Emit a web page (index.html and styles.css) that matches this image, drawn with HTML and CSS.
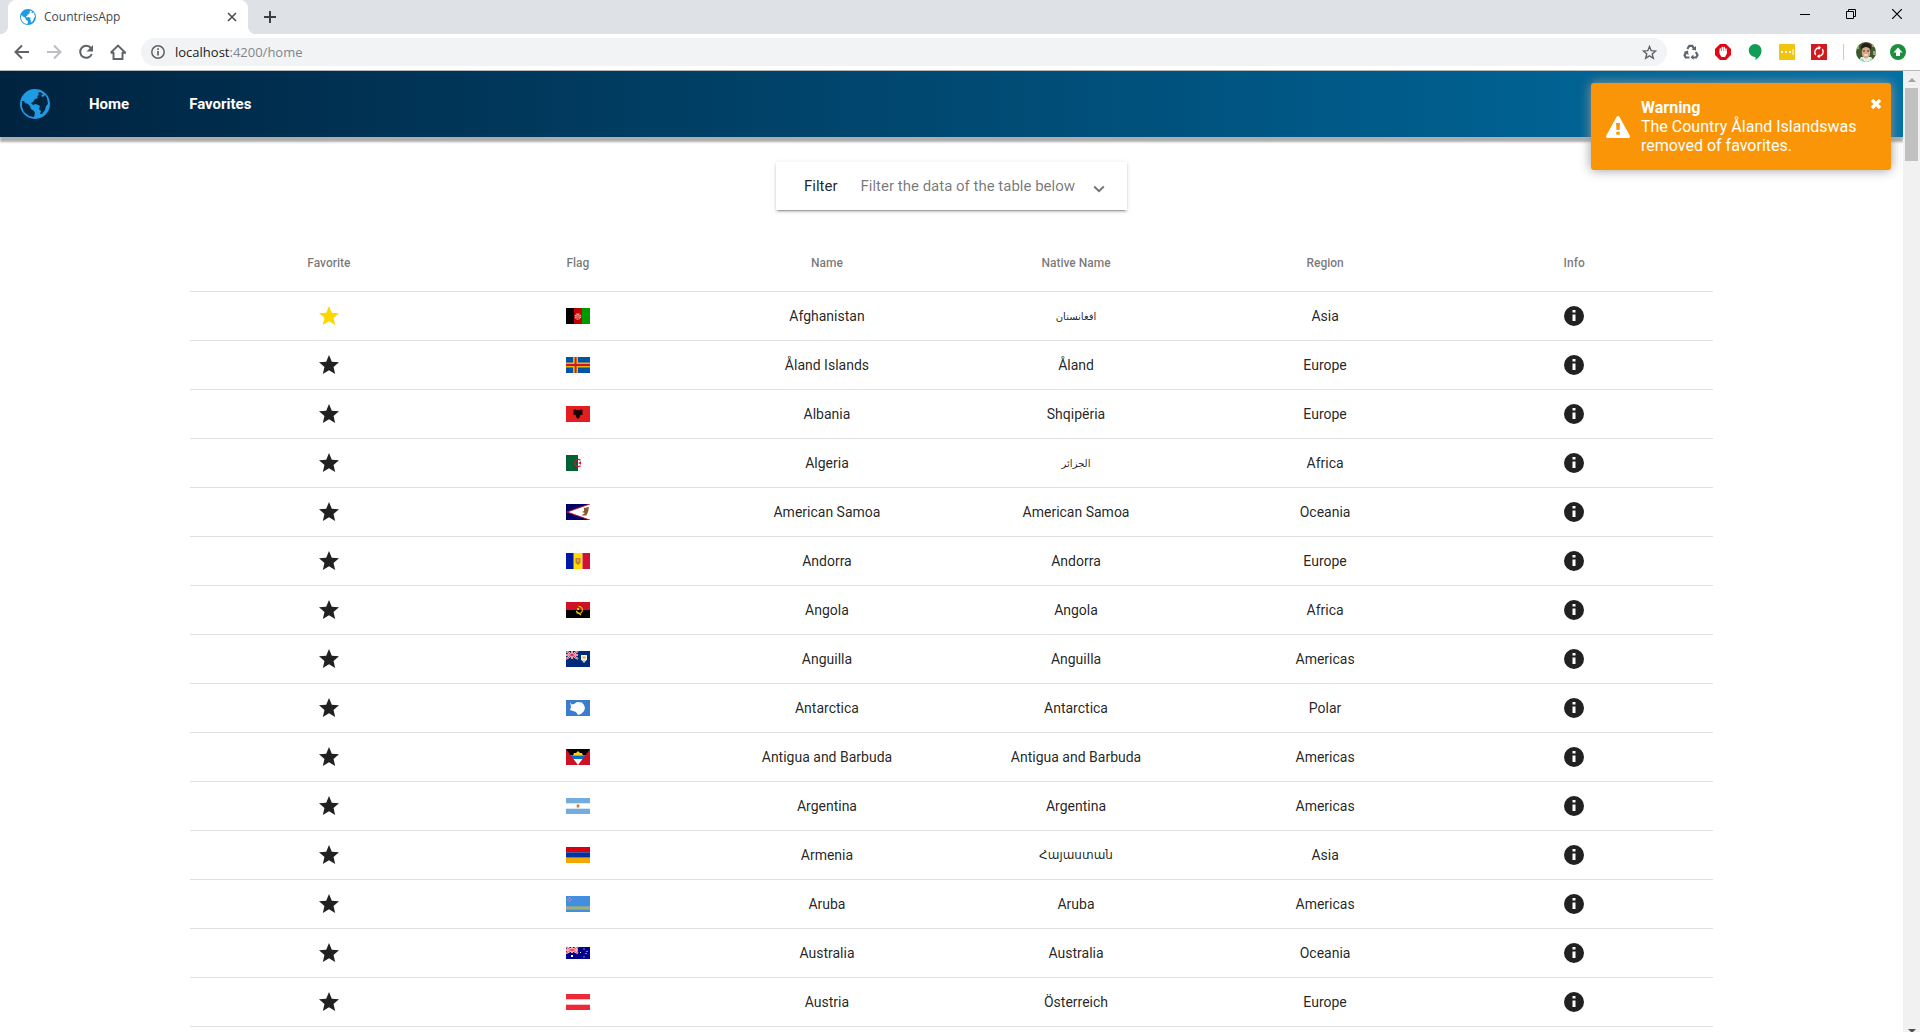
FILE: index.html
```html
<!DOCTYPE html>
<html lang="en">
<head>
<meta charset="utf-8">
<title>CountriesApp</title>
<link rel="stylesheet" href="styles.css">
</head>
<body>
<svg class="defs" aria-hidden="true">
  <symbol id="globe" viewBox="0 0 30 30">
    <path fill="currentColor" fill-rule="evenodd" d="M15 0a15 15 0 1 0 0 30 15 15 0 0 0 0-30zM2 12 4 12 5 14 8 15 10 17 11 20 14 22 15 24 14 28 9 27 4 23 2 18zM15 2 20 3 18 4 19 6 17 7 18 9 15 10 13 13 11 14 13 16 16 15 20 17 19 20 21 22 20 25 22 25 25 21 26 17 28 15 27 9 25 6 23 8 21 7 23 5 20 3z"/>
  </symbol>
  <symbol id="star" viewBox="0 0 24 24"><path fill="currentColor" d="M12 17.27 18.18 21l-1.64-7.03L22 9.24l-7.19-.61L12 2 9.19 8.63 2 9.24l5.46 4.73L5.82 21z"/></symbol>
  <symbol id="info" viewBox="0 0 24 24"><path fill="currentColor" d="M12 2a10 10 0 1 0 0 20 10 10 0 0 0 0-20zm1.500 15h-3v-6.500h3zm0-8.500h-3V6h3z"/></symbol>
</svg>

<header class="browser">
  <div class="tabstrip">
    <div class="tab">
      <svg class="tab-icon"><use href="#globe"/></svg>
      <span class="tab-title">CountriesApp</span>
      <button class="icon-btn" aria-label="Close tab"><svg width="10" height="10" viewBox="0 0 10 10"><path d="M1 1l8 8M9 1L1 9" stroke="#4a4d51" stroke-width="1.6"/></svg></button>
    </div>
    <button class="icon-btn new-tab" aria-label="New tab"><svg width="12" height="12" viewBox="0 0 12 12"><path d="M6 0v12M0 6h12" stroke="#3c4043" stroke-width="2"/></svg></button>
    <div class="window-controls">
      <button class="icon-btn" aria-label="Minimize"><svg width="10" height="10"><path d="M0 5.500h10" stroke="#000"/></svg></button>
      <button class="icon-btn" aria-label="Restore"><svg width="10" height="10"><path d="M.5 2.500h7v7h-7zM2.500 2.500v-2h7v7h-2" fill="none" stroke="#000"/></svg></button>
      <button class="icon-btn" aria-label="Close"><svg width="10" height="10"><path d="M0 0l10 10M10 0L0 10" stroke="#000" stroke-width="1.200"/></svg></button>
    </div>
  </div>
  <div class="toolbar">
    <div class="nav-buttons">
      <button class="icon-btn" aria-label="Back"><svg width="16" height="16" viewBox="0 0 16 16"><path d="M15 8H2M8 1.500 1.500 8 8 14.500" fill="none" stroke="#5f6368" stroke-width="2"/></svg></button>
      <button class="icon-btn" aria-label="Forward"><svg width="16" height="16" viewBox="0 0 16 16"><path d="M1 8h13M8 1.500 14.500 8 8 14.500" fill="none" stroke="#bcbec1" stroke-width="2"/></svg></button>
      <button class="icon-btn" aria-label="Reload"><svg width="16" height="16" viewBox="0 0 16 16"><path d="M13 4.200A6 6 0 1 0 13.800 10" fill="none" stroke="#5f6368" stroke-width="2"/><path d="M15 1v6.500H8.500z" fill="#5f6368"/></svg></button>
      <button class="icon-btn" aria-label="Home page"><svg width="16" height="16" viewBox="0 0 16 16"><path d="M3.500 8v7h9V8M.7 8.700 8 1.500l7.300 7.200H12M.7 8.700H4" fill="none" stroke="#5f6368" stroke-width="1.900"/></svg></button>
    </div>
    <div class="omnibox">
      <svg width="14" height="14" viewBox="0 0 14 14"><circle cx="7" cy="7" r="6.200" fill="none" stroke="#5f6368" stroke-width="1.500"/><path d="M7 6v4.500M7 3.300v1.700" stroke="#5f6368" stroke-width="1.700"/></svg>
      <span class="url"><b>localhost</b>:4200/home</span>
      <button class="icon-btn" aria-label="Bookmark"><svg width="15" height="15" viewBox="0 0 15 15"><path d="M7.500 1.500 9.200 5.700 13.700 6 10.200 8.900 11.300 13.300 7.500 10.900 3.700 13.300 4.800 8.900 1.300 6 5.800 5.700z" fill="none" stroke="#5f6368" stroke-width="1.400"/></svg></button>
    </div>
    <div class="extensions">
      <svg viewBox="0 0 16 16"><path d="M4.300 5 6.300 1.800h3L11 4.500M12.800 8l1.700 3-1.300 2.500H10M6.500 13.500H2.700L1.500 11.200 3 8.500" fill="none" stroke="#5b6673" stroke-width="2.200"/><path d="M8.500 5.500 13 6.500 13 2zM10.500 10.500v5.500L7.500 13.300zM.5 8 5 6.500 5.500 11z" fill="#5b6673"/></svg>
      <svg viewBox="0 0 16 16"><path d="M5 0h6l5 5v6l-5 5H5l-5-5V5z" fill="#e30613"/><path d="M5.300 8V5M7.300 8V3.500M9.200 8V3.500M11 9V5" stroke="#fff" stroke-width="1.500" stroke-linecap="round"/><path d="M4.600 7h7.100v3L10 13H6.500L4.600 10z" fill="#fff"/></svg>
      <svg viewBox="0 0 16 16"><path d="M8 0a6.500 6.500 0 0 1 6.500 7c0 4-3 7-6 9v-3A6.500 6.500 0 0 1 8 0z" fill="#0f9d58"/></svg>
      <svg viewBox="0 0 16 16"><rect width="16" height="16" rx="1" fill="#f1c40f"/><path d="M2 7h2v2H2zM6 7h2v2H6zM10 7h2v2h-2zM13.500 5h1v6h-1z" fill="#fff"/></svg>
      <svg viewBox="0 0 16 16"><rect width="16" height="16" fill="#d11a20"/><path d="M4.700 11A4.500 4.500 0 0 1 8 3.800M11.300 5A4.500 4.500 0 0 1 8 12.200" fill="none" stroke="#fff" stroke-width="1.400"/><path d="M7.500 1.500v4.600l2.600-2.300zM8.500 9.900v4.600l-2.600-2.300z" fill="#fff"/></svg>
    </div>
    <div class="profile">
      <svg width="20" height="20" viewBox="0 0 20 20"><clipPath id="face"><circle cx="10" cy="10" r="10"/></clipPath><g clip-path="url(#face)"><path fill="#3d5a2c" d="M0 0h20v20H0z"/><path fill="#92b06a" d="M0 4h3v3H0zM16 2h2v3h-2zM17 9h3v4h-3z"/><path fill="#e8efe8" d="M2 20l3-5h10l4 5z"/><path fill="#7be0c5" d="M3 20l3-4 3 4zM13 20l2-4 2 4z"/><ellipse cx="10" cy="10.500" rx="4.200" ry="6" fill="#d9a78b"/><path fill="#2a1d18" d="M5 8C4 3 7 1 10 1s6 2 5 7l-1-2-4-1-4 1z"/><path d="M7 9h2M11 9h2" stroke="#4a2d20"/><path d="M8 13h4" stroke="#fff"/></g></svg>
      <svg width="16" height="16" viewBox="0 0 16 16"><circle cx="8" cy="8" r="8" fill="#1e8e3e"/><path d="M8 3.500 12.500 8.500H10v3.500H6V8.500H3.500z" fill="#fff"/></svg>
    </div>
  </div>
</header>

<div class="viewport">
  <div class="page">
    <nav class="navbar">
      <a href="#home" aria-label="Countries"><svg class="logo"><use href="#globe"/></svg></a>
      <a href="#home">Home</a>
      <a href="#favorites">Favorites</a>
    </nav>

    <main>
      <button class="filter" aria-expanded="false">
        <span class="filter-title">Filter</span>
        <span class="filter-text">Filter the data of the table below</span>
        <svg width="12" height="8" viewBox="0 0 12 8"><path d="M1.200 1.500 6 6.200l4.800-4.700" fill="none" stroke="#757575" stroke-width="2"/></svg>
      </button>

      <table class="countries">
        <thead><tr><th>Favorite</th><th>Flag</th><th>Name</th><th>Native Name</th><th>Region</th><th>Info</th></tr></thead>
        <tbody>
          <tr>
            <td><button class="icon-btn favorite" aria-label="Favorite"><svg class="icon"><use href="#star"/></svg></button></td>
            <td><svg class="flag" viewBox="0 0 24 16"><path d="M0 0h8v16H0z"/><path fill="#c00000" d="M8 0h8v16H8z"/><path fill="#009a00" d="M16 0h8v16h-8z"/><circle cx="12" cy="8.500" r="2.700" fill="none" stroke="#eaa" stroke-width="1.200" stroke-dasharray="1.500 .6"/><path fill="#f3cccc" d="M11 6h2v1h1v3h-4V7h1z" opacity=".5"/></svg></td>
            <td>Afghanistan</td><td lang="fa" class="arabic">افغانستان</td><td>Asia</td>
            <td><button class="icon-btn" aria-label="Info"><svg class="icon"><use href="#info"/></svg></button></td>
          </tr>
          <tr>
            <td><button class="icon-btn" aria-label="Favorite"><svg class="icon"><use href="#star"/></svg></button></td>
            <td><svg class="flag" viewBox="0 0 24 16"><path fill="#0053a5" d="M0 0h24v16H0z"/><path fill="#e9b500" d="M7 0h5v16H7zM0 5.500h24v5H0z"/><path fill="#d21034" d="M8.700 0h1.800v16H8.700zM0 7h24v2H0z"/></svg></td>
            <td>Åland Islands</td><td>Åland</td><td>Europe</td>
            <td><button class="icon-btn" aria-label="Info"><svg class="icon"><use href="#info"/></svg></button></td>
          </tr>
          <tr>
            <td><button class="icon-btn" aria-label="Favorite"><svg class="icon"><use href="#star"/></svg></button></td>
            <td><svg class="flag" viewBox="0 0 24 16"><path fill="#e41e20" d="M0 0h24v16H0z"/><path fill="#1a0506" d="M8 3.500h2l1 1 1-1 1 1 1-1h2l.5 1-.5 4-2 1v1.500L13 12l-1 1-1-1-1-1V9.500l-2-1-.5-4z"/><path fill="#7a1214" d="M7 4h1v5H7zM16 4h1v5h-1z"/></svg></td>
            <td>Albania</td><td>Shqipëria</td><td>Europe</td>
            <td><button class="icon-btn" aria-label="Info"><svg class="icon"><use href="#info"/></svg></button></td>
          </tr>
          <tr>
            <td><button class="icon-btn" aria-label="Favorite"><svg class="icon"><use href="#star"/></svg></button></td>
            <td><svg class="flag" viewBox="0 0 24 16"><path fill="#fff" d="M0 0h24v16H0z"/><path fill="#006233" d="M0 0h12v16H0z"/><path d="M14.500 5.200a3.500 3.500 0 1 0 0 5.600" fill="none" stroke="#d21034" stroke-width="1.200"/><path fill="#d21034" d="M12 8l2-1 1-1v4l-1-1z"/></svg></td>
            <td>Algeria</td><td lang="ar" class="arabic">الجزائر</td><td>Africa</td>
            <td><button class="icon-btn" aria-label="Info"><svg class="icon"><use href="#info"/></svg></button></td>
          </tr>
          <tr>
            <td><button class="icon-btn" aria-label="Favorite"><svg class="icon"><use href="#star"/></svg></button></td>
            <td><svg class="flag" viewBox="0 0 24 16"><path fill="#006" d="M0 0h24v16H0z"/><path fill="#fff" stroke="#bd1021" d="M25-.5 1 8l24 8.500z"/><path fill="#8a5a2b" d="M18 4l5-1-1 5-2 4-4-1 3-2-3-1 2-1z"/><path fill="#e9b800" d="M16 11h4v1h-4z"/></svg></td>
            <td>American Samoa</td><td>American Samoa</td><td>Oceania</td>
            <td><button class="icon-btn" aria-label="Info"><svg class="icon"><use href="#info"/></svg></button></td>
          </tr>
          <tr>
            <td><button class="icon-btn" aria-label="Favorite"><svg class="icon"><use href="#star"/></svg></button></td>
            <td><svg class="flag" viewBox="0 0 24 16"><path fill="#0018a8" d="M0 0h8v16H0z"/><path fill="#fedf00" d="M7.500 0h9v16h-9z"/><path fill="#d0103a" d="M16.500 0H24v16h-7.500z"/><path fill="#c7803c" d="M9.500 5h5v5l-2.500 2-2.500-2z"/><path fill="#d9a43c" d="M11 6h2v3h-2z"/></svg></td>
            <td>Andorra</td><td>Andorra</td><td>Europe</td>
            <td><button class="icon-btn" aria-label="Info"><svg class="icon"><use href="#info"/></svg></button></td>
          </tr>
          <tr>
            <td><button class="icon-btn" aria-label="Favorite"><svg class="icon"><use href="#star"/></svg></button></td>
            <td><svg class="flag" viewBox="0 0 24 16"><path d="M0 0h24v16H0z"/><path fill="#ce1126" d="M0 0h24v8H0z"/><path d="M12.500 4.500a3.500 3.500 0 1 1-2 6M10 9l5 4" fill="none" stroke="#e8c100" stroke-width="1.200"/><path fill="#e8c100" d="M11 6h2v2h-2z"/></svg></td>
            <td>Angola</td><td>Angola</td><td>Africa</td>
            <td><button class="icon-btn" aria-label="Info"><svg class="icon"><use href="#info"/></svg></button></td>
          </tr>
          <tr>
            <td><button class="icon-btn" aria-label="Favorite"><svg class="icon"><use href="#star"/></svg></button></td>
            <td><svg class="flag" viewBox="0 0 24 16"><path fill="#002a7a" d="M0 0h24v16H0z"/><path d="M0 0l12 8M12 0 0 8M6 0v8M0 4h12" stroke="#fff" stroke-width="2"/><path d="M0 0l12 8M12 0 0 8M6 0v8M0 4h12" stroke="#d0304a"/><path fill="#f4f4e4" d="M15 4h6v4.500L18 12l-3-3.500z"/><path fill="#e0b040" d="M16.500 5.500h3v2h-3z"/><path fill="#7ac" d="M16.500 9.500h3L18 11z"/></svg></td>
            <td>Anguilla</td><td>Anguilla</td><td>Americas</td>
            <td><button class="icon-btn" aria-label="Info"><svg class="icon"><use href="#info"/></svg></button></td>
          </tr>
          <tr>
            <td><button class="icon-btn" aria-label="Favorite"><svg class="icon"><use href="#star"/></svg></button></td>
            <td><svg class="flag" viewBox="0 0 24 16"><path fill="#3a7dce" d="M0 0h24v16H0z"/><path fill="#fff" d="M4 2l1.500 2.500L8 4l3-2 5 .5L18 5l1 3-1 3-3 3-3 1-2-3-3-1-3-1 1-3z"/></svg></td>
            <td>Antarctica</td><td>Antarctica</td><td>Polar</td>
            <td><button class="icon-btn" aria-label="Info"><svg class="icon"><use href="#info"/></svg></button></td>
          </tr>
          <tr>
            <td><button class="icon-btn" aria-label="Favorite"><svg class="icon"><use href="#star"/></svg></button></td>
            <td><svg class="flag" viewBox="0 0 24 16"><path fill="#fff" d="M0 0h24v16H0z"/><path d="M0 0h24v6.500H0z"/><path fill="#0072c6" d="M0 6.500h24V10H0z"/><path fill="#fcd116" d="M7 6.500 8 4l2 0 2-2 2 2h2l1 2.500z"/><path fill="#ce1126" d="M0 0l12 16H0zM24 0 12 16h12z"/></svg></td>
            <td>Antigua and Barbuda</td><td>Antigua and Barbuda</td><td>Americas</td>
            <td><button class="icon-btn" aria-label="Info"><svg class="icon"><use href="#info"/></svg></button></td>
          </tr>
          <tr>
            <td><button class="icon-btn" aria-label="Favorite"><svg class="icon"><use href="#star"/></svg></button></td>
            <td><svg class="flag" viewBox="0 0 24 16"><path fill="#74acdf" d="M0 0h24v16H0z"/><path fill="#fff" d="M0 5.300h24v5.400H0z"/><path fill="#edc58c" d="M10.500 6h3v4h-3z"/><path fill="#b97a2b" d="M11 7h2v2h-2z"/></svg></td>
            <td>Argentina</td><td>Argentina</td><td>Americas</td>
            <td><button class="icon-btn" aria-label="Info"><svg class="icon"><use href="#info"/></svg></button></td>
          </tr>
          <tr>
            <td><button class="icon-btn" aria-label="Favorite"><svg class="icon"><use href="#star"/></svg></button></td>
            <td><svg class="flag" viewBox="0 0 24 16"><path fill="#d90012" d="M0 0h24v5.300H0z"/><path fill="#0033a0" d="M0 5.300h24v5.400H0z"/><path fill="#f2a800" d="M0 10.700h24V16H0z"/></svg></td>
            <td>Armenia</td><td lang="hy" class="armenian">Հայաստան</td><td>Asia</td>
            <td><button class="icon-btn" aria-label="Info"><svg class="icon"><use href="#info"/></svg></button></td>
          </tr>
          <tr>
            <td><button class="icon-btn" aria-label="Favorite"><svg class="icon"><use href="#star"/></svg></button></td>
            <td><svg class="flag" viewBox="0 0 24 16"><path fill="#418fde" d="M0 0h24v16H0z"/><path fill="#9fae80" d="M0 10.300h24v3.400H0z"/><path fill="#a8ad6c" d="M0 11.500h24v1H0z"/><path fill="#b8cdec" d="M3.500 1 4.300 2.700 6 3.500 4.300 4.300 3.500 6 2.700 4.300 1 3.500 2.700 2.700z"/><path fill="#e0354f" d="M2.500 2.500h2v2h-2z"/></svg></td>
            <td>Aruba</td><td>Aruba</td><td>Americas</td>
            <td><button class="icon-btn" aria-label="Info"><svg class="icon"><use href="#info"/></svg></button></td>
          </tr>
          <tr>
            <td><button class="icon-btn" aria-label="Favorite"><svg class="icon"><use href="#star"/></svg></button></td>
            <td><svg class="flag" viewBox="0 0 24 16"><path fill="#00008b" d="M0 2h24v12H0z"/><path d="M0 2l12 6M12 2 0 8M6 2v6M0 5h12" stroke="#fff" stroke-width="2"/><path d="M0 2l12 6M12 2 0 8M6 2v6M0 5h12" stroke="#f45"/><path fill="#fff" d="M5 10h2v2H5zM17.500 3.500h1v1h-1zM14 7h1v1h-1zM20.500 6h1v1h-1zM19.500 8h1v1h-1zM17.500 11.500h1v1h-1z"/></svg></td>
            <td>Australia</td><td>Australia</td><td>Oceania</td>
            <td><button class="icon-btn" aria-label="Info"><svg class="icon"><use href="#info"/></svg></button></td>
          </tr>
          <tr>
            <td><button class="icon-btn" aria-label="Favorite"><svg class="icon"><use href="#star"/></svg></button></td>
            <td><svg class="flag" viewBox="0 0 24 16"><path fill="#ed2939" d="M0 0h24v16H0z"/><path fill="#fff" d="M0 5.300h24v5.400H0z"/></svg></td>
            <td>Austria</td><td>Österreich</td><td>Europe</td>
            <td><button class="icon-btn" aria-label="Info"><svg class="icon"><use href="#info"/></svg></button></td>
          </tr>
        </tbody>
      </table>
    </main>

    <div class="toast" role="alert">
      <svg width="24" height="22" viewBox="0 0 24 22"><path fill="#fff" fill-rule="evenodd" d="M10.500 1a1.700 1.700 0 0 1 3 0l10.200 18.500A1.600 1.600 0 0 1 22.300 22H1.700A1.600 1.600 0 0 1 .3 19.500zM10 7l.5 7h3l.5-7zM10.300 15.800v3h3.400v-3z"/></svg>
      <div class="toast-body">
        <strong>Warning</strong>
        <p>The Country Åland Islandswas removed of favorites.</p>
      </div>
      <button class="icon-btn toast-close" aria-label="Dismiss"><svg width="10" height="10" viewBox="0 0 10 10"><path d="M1 1l8 8M9 1 1 9" stroke="#fff" stroke-width="3.400"/></svg></button>
    </div>
  </div>

  <div class="scrollbar" aria-hidden="true">
    <svg width="8" height="4"><path fill="#a3a3a3" d="M0 4 4 0l4 4z"/></svg>
    <div class="thumb"></div>
    <svg class="down" width="8" height="3"><path fill="#505050" d="M0 0h8L4 4z"/></svg>
  </div>
</div>
</body>
</html>
```
FILE: styles.css
```css
* { box-sizing: border-box; }

body {
  margin: 0;
  height: 100vh;
  display: flex;
  flex-direction: column;
  overflow: hidden;
  background: #fff;
  font-family: Roboto, "DejaVu Sans", sans-serif;
  color: rgba(0, 0, 0, .87);
}

svg { display: block; flex: none; }
.defs { position: absolute; width: 0; height: 0; }

.icon-btn {
  display: flex;
  padding: 0;
  border: 0;
  background: none;
  color: inherit;
}

/* Browser frame */
.browser {
  flex: none;
  font-family: "Open Sans", sans-serif;
  border-bottom: 1px solid #b6b8ba;
}

.tabstrip {
  display: flex;
  align-items: center;
  height: 34px;
  padding-left: 8px;
  background: #dee1e6;
}

.tab {
  position: relative;
  display: flex;
  align-items: center;
  gap: 8px;
  width: 240px;
  height: 34px;
  padding: 0 11px 0 12px;
  border-radius: 8px 8px 0 0;
  background: #fff;
}

.tab::before,
.tab::after {
  content: "";
  position: absolute;
  bottom: 0;
  width: 8px;
  height: 8px;
}
.tab::before { right: 100%; background: radial-gradient(circle at 0 0, #dee1e6 8px, #fff 8px); }
.tab::after { left: 100%; background: radial-gradient(circle at 100% 0, #dee1e6 8px, #fff 8px); }

.tab-icon { width: 16px; height: 16px; color: #1e9be3; }
.tab-title { flex: 1; font-size: 12px; line-height: 16px; color: #45484c; }
.new-tab { margin-left: 16px; }

.window-controls {
  display: flex;
  gap: 36px;
  margin-left: auto;
  padding: 0 18px 6px 0;
}

.toolbar {
  display: flex;
  align-items: center;
  height: 36px;
  padding: 0 14px;
}

.nav-buttons { display: flex; gap: 16px; margin-right: 15px; }

.omnibox {
  display: flex;
  flex: 1;
  align-items: center;
  gap: 10px;
  height: 28px;
  padding: 0 10px;
  border-radius: 14px;
  background: #f1f3f4;
}

.url { flex: 1; font-size: 13px; color: #80868b; }
.url b { font-weight: 400; color: #202124; }

.extensions {
  display: flex;
  gap: 16px;
  padding: 0 16px;
  border-right: 1px solid #c8cacd;
}
.extensions svg { width: 16px; height: 16px; }

.profile { display: flex; align-items: center; gap: 14px; margin-left: 12px; }

/* Page */
.viewport { display: flex; flex: 1; min-height: 0; }
.page { position: relative; flex: 1; overflow: hidden; }

.navbar {
  display: flex;
  align-items: center;
  height: 66px;
  padding-left: 20px;
  background: linear-gradient(to right, #002340, #0070a5);
  box-shadow: 0 5px 2px rgba(0, 0, 0, .32);
}
.navbar a {
  margin-right: 60px;
  font-size: 15px;
  font-weight: 700;
  color: #fff;
  text-decoration: none;
}
.navbar a:first-child { margin-right: 39px; }
.logo { width: 30px; height: 30px; color: #1e9be3; }

.filter {
  display: flex;
  align-items: center;
  width: 351px;
  height: 48px;
  margin: 25px auto;
  padding: 0 22px 0 28px;
  border: 0;
  background: #fff;
  box-shadow: 0 3px 1px -2px rgba(0, 0, 0, .2), 0 2px 2px rgba(0, 0, 0, .14), 0 1px 5px rgba(0, 0, 0, .12);
  font: 15px Roboto, sans-serif;
  color: rgba(0, 0, 0, .87);
}
.filter-text { margin: 0 auto 0 23px; color: rgba(0, 0, 0, .54); }
.filter svg { margin-top: 6px; }

.countries { display: block; width: 80%; margin: 0 auto; }
.countries thead, .countries tbody { display: block; }
.countries tr {
  display: grid;
  grid-template-columns: repeat(6, 1fr);
  align-items: center;
  justify-items: center;
  height: 49px;
  padding: 0 14px;
  border-bottom: 1px solid #e0e0e0;
}
.countries thead tr { height: 57px; }
.countries th { padding: 0; font-size: 12px; font-weight: 500; color: rgba(0, 0, 0, .54); }
.countries td { padding: 0; font-size: 14px; }
.countries .arabic { font-family: "DejaVu Sans", sans-serif; font-size: 10px; }
.countries .armenian { font-family: "DejaVu Sans", sans-serif; font-size: 12px; }

.icon { width: 24px; height: 24px; }
.flag { width: 24px; height: 16px; }
.countries .favorite { color: #ffd600; }

.toast {
  position: absolute;
  top: 12px;
  right: 12px;
  display: flex;
  align-items: center;
  gap: 11px;
  width: 300px;
  padding: 15px;
  border-radius: 3px;
  background: #f99507;
  box-shadow: 0 0 12px #999;
  font-size: 16px;
  line-height: 19px;
  color: #fff;
}
.toast-body { flex: 1; }
.toast strong { display: block; }
.toast p { margin: 0; }
.toast-close { position: absolute; top: 16px; right: 10px; }

.scrollbar {
  display: flex;
  flex-direction: column;
  align-items: center;
  width: 17px;
  padding-top: 7px;
  background: #f1f1f1;
}
.thumb { width: 13px; height: 73px; margin-top: 6px; background: #c1c1c1; }
.down { margin-top: auto; }
```
